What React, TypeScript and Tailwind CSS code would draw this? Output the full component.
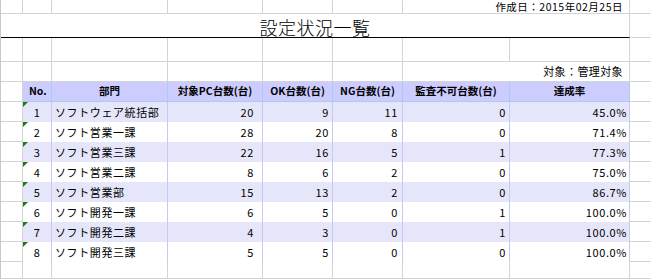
import React from 'react';

type Row = { no: number; dept: string; pc: number; ok: number; ng: number; ng2: number; rate: string };

const rows: Row[] = [
  { no: 1, dept: 'ソフトウェア統括部', pc: 20, ok: 9, ng: 11, ng2: 0, rate: '45.0%' },
  { no: 2, dept: 'ソフト営業一課', pc: 28, ok: 20, ng: 8, ng2: 0, rate: '71.4%' },
  { no: 3, dept: 'ソフト営業三課', pc: 22, ok: 16, ng: 5, ng2: 1, rate: '77.3%' },
  { no: 4, dept: 'ソフト営業二課', pc: 8, ok: 6, ng: 2, ng2: 0, rate: '75.0%' },
  { no: 5, dept: 'ソフト営業部', pc: 15, ok: 13, ng: 2, ng2: 0, rate: '86.7%' },
  { no: 6, dept: 'ソフト開発一課', pc: 6, ok: 5, ng: 0, ng2: 1, rate: '100.0%' },
  { no: 7, dept: 'ソフト開発二課', pc: 4, ok: 3, ng: 0, ng2: 1, rate: '100.0%' },
  { no: 8, dept: 'ソフト開発三課', pc: 5, ok: 5, ng: 0, ng2: 0, rate: '100.0%' },
];

// column widths: 0-22, 22-51, 51-167, 167-262, 262-332, 332-402, 402-509, 509-629, 629-651
const widths = ['w-[22px]', 'w-[29px]', 'w-[116px]', 'w-[95px]', 'w-[70px]', 'w-[70px]', 'w-[107px]', 'w-[120px]', 'w-[22px]'];

function GridRow({ h }: { h: string }) {
  return (
    <div className={`flex ${h}`}>
      {widths.map((w, i) => (
        <div key={i} className={`${w} shrink-0 border-b border-r border-[#d4d4d4]`} />
      ))}
    </div>
  );
}

export default function App() {
  return (
    <div
      className="w-[651px] h-[279px] overflow-hidden bg-white text-black border-l border-[#c8c8c8]"
      style={{ fontFamily: '"Noto Sans CJK JP", "Liberation Sans", sans-serif' }}
    >
      {/* row 0: date */}
      <div className="flex h-[14px]">
        {widths.slice(0, 6).map((w, i) => (
          <div key={i} className={`${w} shrink-0 border-b border-r border-[#d4d4d4]`} />
        ))}
        <div className="w-[227px] shrink-0 border-b border-r border-[#d4d4d4] flex items-center justify-end pr-[6px] text-[10.5px] leading-[12px] tracking-[0.5px]">
          作成日：2015年02月25日
        </div>
        <div className="w-[22px] shrink-0 border-b border-r border-[#d4d4d4]" />
      </div>

      {/* title */}
      <div className="flex h-[24px]">
        <div className="w-[629px] shrink-0 border-b border-r border-b-black border-r-[#d4d4d4] flex items-end justify-center pb-[1px] text-[18px] leading-none font-light tracking-[0.5px]">
          設定状況一覧
        </div>
        <div className="w-[22px] shrink-0 border-b border-r border-[#d4d4d4]" />
      </div>

      <GridRow h="h-[24px]" />

      {/* target */}
      <div className="flex h-[20px]">
        {widths.slice(0, 6).map((w, i) => (
          <div key={i} className={`${w} shrink-0 border-b border-r border-[#d4d4d4]`} />
        ))}
        <div className="w-[227px] shrink-0 border-b border-r border-[#d4d4d4] flex items-center justify-end pr-[6px] text-[11px] leading-none tracking-[0.4px]">
          対象：管理対象
        </div>
        <div className="w-[22px] shrink-0 border-b border-r border-[#d4d4d4]" />
      </div>

      {/* header */}
      <div className="flex h-[20px] text-[10.5px] font-bold leading-none">
        <div className="w-[22px] shrink-0 border-b border-r border-[#d4d4d4]" />
        <div className="w-[29px] shrink-0 bg-[#ccccff] border-b border-r border-[#a8ccf4] flex items-center pl-[6px]">No.</div>
        <div className="w-[116px] shrink-0 bg-[#ccccff] border-b border-r border-[#a8ccf4] flex items-center justify-center">部門</div>
        <div className="w-[95px] shrink-0 bg-[#ccccff] border-b border-r border-[#a8ccf4] flex items-center justify-center">対象PC台数(台)</div>
        <div className="w-[70px] shrink-0 bg-[#ccccff] border-b border-r border-[#a8ccf4] flex items-center justify-center">OK台数(台)</div>
        <div className="w-[70px] shrink-0 bg-[#ccccff] border-b border-r border-[#a8ccf4] flex items-center justify-center">NG台数(台)</div>
        <div className="w-[107px] shrink-0 bg-[#ccccff] border-b border-r border-[#a8ccf4] flex items-center justify-center">監査不可台数(台)</div>
        <div className="w-[120px] shrink-0 bg-[#ccccff] border-b border-r border-[#a8ccf4] flex items-center justify-center">達成率</div>
        <div className="w-[22px] shrink-0 border-b border-r border-[#d4d4d4]" />
      </div>

      {/* data rows */}
      {rows.map((r, idx) => {
        const bg = idx % 2 === 0 ? 'bg-[#e6e6fa]' : 'bg-white';
        const cell = `shrink-0 ${bg} border-r border-[#c8c8f0] flex items-center`;
        return (
          <div key={r.no} className="flex h-[20px] text-[11px] leading-none tracking-[0.6px]">
            <div className="w-[22px] shrink-0 border-b border-r border-[#d4d4d4]" />
            <div className={`relative w-[29px] justify-center ${cell}`}>
              <span className="absolute left-0 top-0 w-0 h-0 border-t-[5px] border-r-[5px] border-t-[#1c7a1c] border-r-transparent" />
              {r.no}
            </div>
            <div className={`w-[116px] pl-[3px] ${cell}`}>{r.dept}</div>
            <div className={`w-[95px] justify-end pr-[8px] ${cell}`}>{r.pc}</div>
            <div className={`w-[70px] justify-end pr-[3px] ${cell}`}>{r.ok}</div>
            <div className={`w-[70px] justify-end pr-[4px] ${cell}`}>{r.ng}</div>
            <div className={`w-[107px] justify-end pr-[3px] ${cell}`}>{r.ng2}</div>
            <div className={`w-[120px] justify-end pr-[2px] ${cell}`}>{r.rate}</div>
            <div className="w-[22px] shrink-0 border-b border-r border-[#d4d4d4]" />
          </div>
        );
      })}

      <GridRow h="h-[17px]" />
    </div>
  );
}
